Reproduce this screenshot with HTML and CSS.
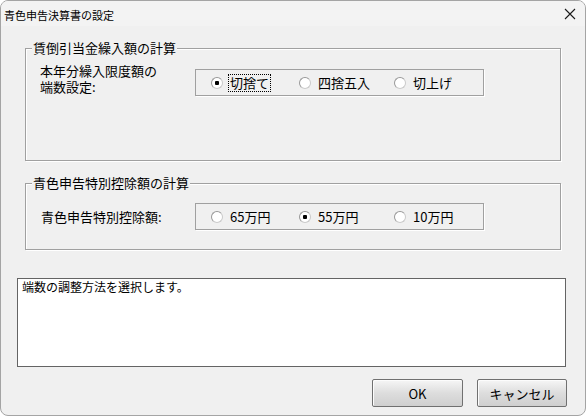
FILE: index.html
```html
<!DOCTYPE html>
<html lang="ja">

<head>
  <meta charset="UTF-8">
  <title>青色申告決算書の設定</title>
  <link rel="stylesheet" href="styles.css">
</head>

<body>
  <div class="window">
    <div class="titlebar">
      <span class="title">青色申告決算書の設定</span>
      <svg class="close" width="12" height="12" viewBox="0 0 12 12">
        <path d="M1 1 L11 11 M11 1 L1 11" stroke="#1a1a1a" stroke-width="1.1" fill="none" />
      </svg>
    </div>

    <div class="content">
      <div class="group group-rounding">
        <div class="group-title">賃倒引当金繰入額の計算</div>
        <div class="group-row">
          <div class="row-label">本年分繰入限度額の<br>端数設定:</div>
          <div class="radio-box">
            <label class="radio-item"><input type="radio" name="round" checked><span class="focus">切捨て</span></label>
            <label class="radio-item"><input type="radio" name="round"><span>四捨五入</span></label>
            <label class="radio-item"><input type="radio" name="round"><span>切上げ</span></label>
          </div>
        </div>
      </div>

      <div class="group group-deduction">
        <div class="group-title">青色申告特別控除額の計算</div>
        <div class="group-row">
          <div class="row-label single">青色申告特別控除額:</div>
          <div class="radio-box">
            <label class="radio-item"><input type="radio" name="deduct"><span>65万円</span></label>
            <label class="radio-item"><input type="radio" name="deduct" checked><span>55万円</span></label>
            <label class="radio-item"><input type="radio" name="deduct"><span>10万円</span></label>
          </div>
        </div>
      </div>

      <div class="hint">端数の調整方法を選択します。</div>

      <div class="buttons">
        <button class="btn">OK</button>
        <button class="btn">キャンセル</button>
      </div>
    </div>
  </div>
</body>

</html>
```

FILE: styles.css
```css
/* Base styles */
* {
  box-sizing: border-box;
}

html,
body {
  margin: 0;
  padding: 0;
  background: #ffffff;
}

body {
  font-family: "Noto Sans CJK JP", "Noto Sans", sans-serif;
  font-size: 13px;
  color: #000;
  width: 586px;
  height: 418px;
  overflow: hidden;
}

.window {
  width: 586px;
  height: 416px;
  border: 1px solid #a4a4a4;
  border-radius: 8px;
  background: #f0f0f0;
  overflow: hidden;
}

/* Title bar */
.titlebar {
  height: 25px;
  background: #f3f3f3;
  display: flex;
  align-items: center;
  justify-content: space-between;
  padding: 0 9px 0 3px;
}

.title {
  font-size: 11px;
  line-height: 14px;
  margin-top: 2px;
}

.close {
  margin-top: 1px;
}

/* Dialog body */
.content {
  padding: 0 0 0 16px;
}

.group {
  width: 536px;
  margin-left: 8px;
  border: 1px solid #a0a0a0;
  box-shadow: 1px 1px 0 #fff, inset 1px 1px 0 #fff;
}

.group-rounding {
  height: 113px;
  margin-top: 22px;
}

.group-deduction {
  height: 67px;
  margin-top: 22px;
}

.group-title {
  width: fit-content;
  margin: -9px 0 0 6px;
  padding: 0 1px;
  line-height: 16px;
  background: #f0f0f0;
}

.group-row {
  display: flex;
  align-items: flex-start;
  padding-left: 14px;
}

.group-rounding .group-row {
  margin-top: 7px;
}

.group-deduction .group-row {
  margin-top: 12px;
  padding-left: 15px;
  align-items: center;
}

.row-label {
  width: 155px;
  line-height: 16px;
}

.row-label.single {
  width: 154px;
}

.group-rounding .radio-box {
  margin-top: 6px;
}

.radio-box {
  width: 289px;
  height: 27px;
  border: 1px solid #a0a0a0;
  box-shadow: 1px 1px 0 #fff;
  display: grid;
  grid-template-columns: 88px 95px auto;
  align-items: center;
  padding-left: 15px;
}

.radio-item {
  display: flex;
  align-items: center;
  line-height: 16px;
}

.radio-item input {
  appearance: none;
  -webkit-appearance: none;
  width: 12px;
  height: 12px;
  margin: 0 5px 0 0;
  border: 1px solid #989898;
  border-right-color: #cacaca;
  border-bottom-color: #cacaca;
  border-radius: 50%;
  background: #fff;
}

.radio-item input:checked {
  background: radial-gradient(circle, #000 0 2px, #fff 2.5px);
}

.radio-item span {
  padding: 0 1px;
  border: 1px dotted transparent;
}

.radio-item .focus {
  border-color: #000;
}

/* Message box */
.hint {
  width: 549px;
  height: 89px;
  margin: 28px 0 0 0;
  border: 1px solid #646464;
  background: #fff;
  font-size: 12px;
  line-height: 15px;
  padding: 0 4px;
}

.buttons {
  display: flex;
  justify-content: flex-end;
  gap: 14px;
  width: 550px;
  margin-top: 12px;
}

.btn {
  width: 91px;
  height: 28px;
  font-family: inherit;
  font-size: 13px;
  border: 1px solid #707070;
  border-radius: 2px;
  background: linear-gradient(#f6f6f6, #dddddd 50%, #cfcfcf);
  box-shadow: inset 1px 1px 0 #fcfcfc;
  color: #000;
  padding: 0;
}

.btn + .btn {
  width: 90px;
}
```
